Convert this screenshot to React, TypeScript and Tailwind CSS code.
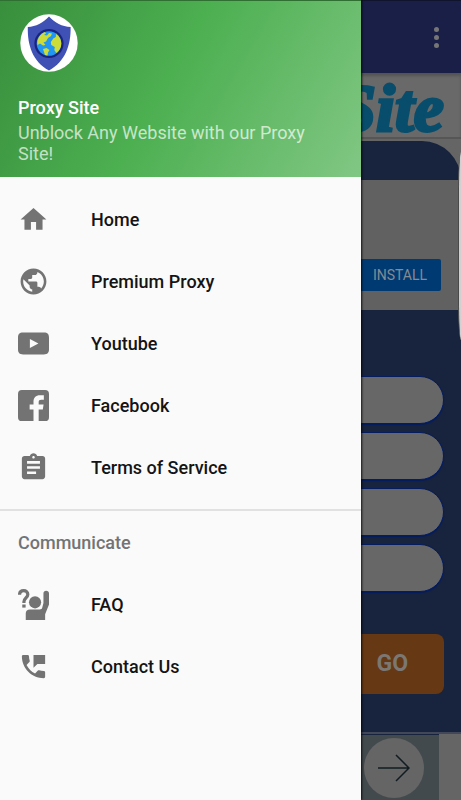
import type { ReactNode } from "react";

function Glyph({ children }: { children: ReactNode }) {
  return (
    <svg viewBox="0 0 24 24" className="size-[31px] shrink-0" fill="#737373" aria-hidden="true">
      {children}
    </svg>
  );
}

const mainLinks: { label: string; icon: ReactNode }[] = [
  { label: "Home", icon: <path d="M10 20v-6h4v6h5v-8h3L12 3 2 12h3v8z" /> },
  {
    label: "Premium Proxy",
    icon: (
      <path d="M12 2C6.48 2 2 6.48 2 12s4.48 10 10 10 10-4.48 10-10S17.52 2 12 2zm-1 17.93c-3.95-.49-7-3.85-7-7.93 0-.62.08-1.21.21-1.79L9 15v1c0 1.100.9 2 2 2v1.930zm6.900-2.540c-.26-.81-1-1.390-1.900-1.390h-1v-3c0-.55-.45-1-1-1H8v-2h2c.55 0 1-.45 1-1V7h2c1.100 0 2-.9 2-2v-.41c2.930 1.190 5 4.060 5 7.410 0 2.080-.8 3.970-2.100 5.390z" />
    ),
  },
  {
    label: "Youtube",
    icon: (
      <path
        fillRule="evenodd"
        d="M4 3.500C1 3.500 0 5 0 7.500v9c0 2.500 1 4 4 4h16c3 0 4-1.500 4-4v-9c0-2.500-1-4-4-4zM9.200 8.500v7l6.600-3.500z"
      />
    ),
  },
  {
    label: "Facebook",
    icon: (
      <path d="M3 0h18a3 3 0 0 1 3 3v18a3 3 0 0 1-3 3h-5v-9h3.200l.6-3.800H16V9.500c0-1.300.6-1.900 2-1.900h2V4h-3c-3.300 0-5 1.900-5 5v2.200H9V15h3v9H3a3 3 0 0 1-3-3V3a3 3 0 0 1 3-3z" />
    ),
  },
  {
    label: "Terms of Service",
    icon: (
      <path d="M19 3h-4.180C14.400 1.840 13.300 1 12 1c-1.300 0-2.400.84-2.820 2H5c-1.100 0-2 .9-2 2v14c0 1.100.9 2 2 2h14c1.100 0 2-.9 2-2V5c0-1.100-.9-2-2-2zm-7 0c.55 0 1 .45 1 1s-.45 1-1 1-1-.45-1-1 .45-1 1-1zm2 14H7v-2h7v2zm3-4H7v-2h10v2zm0-4H7V7h10v2z" />
    ),
  },
];

const communicateLinks: { label: string; icon: ReactNode }[] = [
  {
    label: "FAQ",
    icon: (
      <>
        <path
          d="M1.200 4.500C1.200 2.400 2.600 1.300 4.400 1.300S7.600 2.400 7.600 4.200c0 2.500-3 2.900-3 5.600v1"
          fill="none"
          stroke="#737373"
          strokeWidth="2.500"
        />
        <rect x="3.300" y="12" width="2.600" height="2.400" />
        <circle cx="13.200" cy="10.300" r="4.700" />
        <path d="M19.700 3.400c0-1.300.8-2 2.100-2s2.200.7 2.200 2V12l-3 7.500V24H6v-5c0-2.100 1.200-3.200 3.300-3.200h7.400c1.300 0 1.800-.4 2.100-1.500l.9-3.500z" />
      </>
    ),
  },
  {
    label: "Contact Us",
    icon: (
      <path d="M20 15.500c-1.250 0-2.450-.2-3.570-.57-.35-.11-.74-.03-1.020.24l-2.200 2.200c-2.830-1.440-5.150-3.750-6.590-6.580l2.200-2.210c.28-.27.36-.66.250-1.010C8.700 6.450 8.500 5.250 8.500 4c0-.55-.45-1-1-1H4c-.55 0-1 .45-1 1 0 9.390 7.610 17 17 17 .55 0 1-.45 1-1v-3.500c0-.55-.45-1-1-1zM12 3v10l3-3h6V3h-9z" />
    ),
  },
];

function NavLink({ label, icon }: { label: string; icon: ReactNode }) {
  return (
    <li>
      <a href="#" className="flex h-[62px] items-center gap-[42px] px-[18px] text-[18px] font-medium text-[#141414]">
        <Glyph>{icon}</Glyph>
        {label}
      </a>
    </li>
  );
}

function ShieldLogo() {
  return (
    <svg viewBox="0 0 58 58" className="size-[58px]" role="img" aria-label="Proxy Site logo">
      <circle cx="29" cy="29" r="28.700" fill="#fff" />
      <path d="M29 2.500C23 9 16 12.500 7.800 13c-.4 18 4.800 34.500 21.200 43.500C45.400 47.500 51 31 50.600 13 42 12.500 35 9 29 2.500z" fill="#3f51b5" />
      <circle cx="29" cy="29.500" r="14.600" fill="#1a237e" />
      <circle cx="29" cy="29.500" r="12.300" fill="#2196f3" />
      <path
        fill="#cddc39"
        d="M19 23c1.500-2.500 3.500-4 6-5l1 1.500-2 1.500 3 .5 2-2.500 3 .5-1 2.500-3 2-2 3.500-2.500 1 2 2.500-2.500.5-3-2-2.500 1.500c-.6-3 0-5.500 1.500-8zM36 20c3.500 2 5.300 6 5.300 9.500 0 4-2 7.500-5 9.500l-2-3 .5-3-3.500-2-.5-3 2.500-3.500 2.500-1.500zM23 35l3.500-1 3 2-1.500 2.500-.5 3-2.500-.6-1-3z"
      />
    </svg>
  );
}

function Drawer() {
  return (
    <aside className="absolute inset-y-0 left-0 w-[361px] max-w-full bg-[#fafafa] shadow-[1px_0_2px_rgba(0,0,0,0.8)]">
      <header className="border-t border-[#2f6f32] bg-[linear-gradient(120deg,#388e3c,#4caf50_46%,#81c784)] px-[18px] py-[13px] text-[18px] text-white">
        <div className="ml-[2px]">
          <ShieldLogo />
        </div>
        <h1 className="mt-6 leading-[24px] font-medium">Proxy Site</h1>
        <p className="mt-[2px] leading-[21px] text-white/70">Unblock Any Website with our Proxy Site!</p>
      </header>
      <nav aria-label="Main">
        <ul className="border-b-2 border-[#e1e1e1] pt-[11px] pb-[11px]">
          {mainLinks.map((link) => (
            <NavLink key={link.label} {...link} />
          ))}
        </ul>
        <h2 className="flex h-[62px] items-center px-[18px] text-[18px] font-medium text-[#737373]">Communicate</h2>
        <ul>
          {communicateLinks.map((link) => (
            <NavLink key={link.label} {...link} />
          ))}
        </ul>
      </nav>
    </aside>
  );
}

function ProxyPage() {
  return (
    <main className="flex min-h-screen flex-col">
      <div className="flex h-[73px] items-center justify-end border-t border-[#11142d] bg-[#191f46] px-[18px]">
        <button type="button" aria-label="More options" className="flex w-[14px] flex-col items-center gap-[3px]">
          <span className="size-[5px] rounded-full bg-[#767676]" />
          <span className="size-[5px] rounded-full bg-[#767676]" />
          <span className="size-[5px] rounded-full bg-[#767676]" />
        </button>
      </div>
      <div className="flex h-[66px] items-center justify-end border-b-2 border-[#565656] bg-[#696969] px-[17px] pt-[6px] shadow-[inset_0_3px_3px_rgba(0,0,0,0.2)]">
        <span className="font-['Liberation_Serif',serif] text-[68px] leading-[58px] font-bold text-[#084e6c] italic [-webkit-text-stroke:3px_#084e6c]">
          Site
        </span>
      </div>
      <div className="bg-[#656565] pt-[2px]">
        <div className="h-[39px] rounded-tr-[40px] bg-[#18233d]" />
      </div>
      <div className="flex h-[130px] items-end justify-end bg-[#616161] px-5 pb-[19px]">
        <button type="button" className="h-8 w-[108px] rounded-[2px] bg-[#003a73] pl-[26px] text-[14px] text-[#858b92]">
          INSTALL
        </button>
      </div>
      <form className="flex grow flex-col bg-[#18233d] px-[17px] pt-[66px]" onSubmit={(event) => event.preventDefault()}>
        <div className="flex flex-col gap-2">
          {["Website address", "Server location", "Encryption", "Browser"].map((name) => (
            <input
              key={name}
              type="text"
              aria-label={name}
              className="h-12 w-full rounded-full border border-[#041c60] bg-[#676767] px-6 shadow-[0_1px_1px_#041c60]"
            />
          ))}
        </div>
        <button type="submit" className="mt-[42px] h-[60px] w-full rounded-lg bg-[#663814] pr-9 text-right text-[23px] font-bold text-[#7b7773]">
          GO
        </button>
      </form>
      <div className="flex h-[68px] justify-end border-t-2 border-[#42485a] bg-[#656565] pr-[22px]">
        <div className="flex w-[160px] items-center justify-end border-t border-[#18233d] bg-[#434a4d] pr-[15px]">
          <button type="button" aria-label="Open" className="flex size-[60px] items-center justify-center rounded-full bg-[#656565]">
            <svg viewBox="0 0 32 28" className="h-7 w-8" fill="none" stroke="#101c21" strokeWidth="1.500" aria-hidden="true">
              <path d="M0 14h31M18 1l13 13-13 13" />
            </svg>
          </button>
        </div>
      </div>
    </main>
  );
}

export default function App() {
  return (
    <div className="relative min-h-screen overflow-hidden font-[Roboto,sans-serif]">
      <ProxyPage />
      <Drawer />
      <div className="absolute top-[152px] right-0 h-[188px] w-[3px] rounded-l-[3px_40px] border-l border-[#4a4a4a] bg-[#d0d0d0]" />
    </div>
  );
}
